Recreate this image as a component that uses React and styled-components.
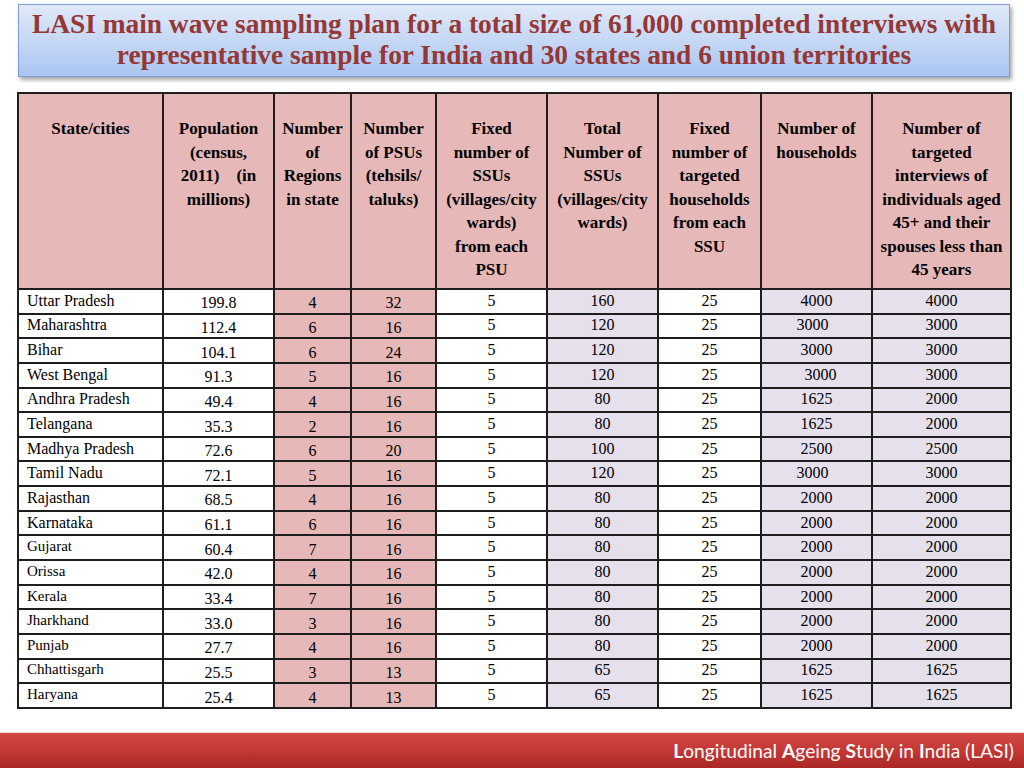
import React from "react";
import styled, { createGlobalStyle, css } from "styled-components";

const GlobalStyle = createGlobalStyle`
  html, body {
    margin: 0;
    padding: 0;
    background: #ffffff;
  }
`;

const COLS = [145, 111, 77, 85, 111, 111, 103, 111, 139];

// background for each body column
const FILL = {
  white: "#ffffff",
  pink: "#e6b9b8",
  lilac: "#e5e0ec",
};
const BODY_FILL = ["white", "white", "pink", "pink", "white", "lilac", "white", "lilac", "lilac"];

const HEADERS = [
  ["State/cities"],
  ["Population", "(census,", "2011)\u00a0\u00a0\u00a0\u00a0(in", "millions)"],
  ["Number", "of", "Regions", "in state"],
  ["Number", "of PSUs", "(tehsils/", "taluks)"],
  ["Fixed", "number of", "SSUs", "(villages/city", "wards)", "from each", "PSU"],
  ["Total", "Number of", "SSUs", "(villages/city", "wards)"],
  ["Fixed", "number of", "targeted", "households", "from each", "SSU"],
  ["Number of", "households"],
  ["Number of", "targeted", "interviews of", "individuals aged", "45+ and their", "spouses less than", "45 years"],
];

const ROWS = [
  ["Uttar Pradesh", "199.8", "4", "32", "5", "160", "25", "4000", "4000"],
  ["Maharashtra", "112.4", "6", "16", "5", "120", "25", "3000\u00a0\u00a0", "3000"],
  ["Bihar", "104.1", "6", "24", "5", "120", "25", "3000", "3000"],
  ["West Bengal", "91.3", "5", "16", "5", "120", "25", "\u00a0\u00a03000", "3000"],
  ["Andhra Pradesh", "49.4", "4", "16", "5", "80", "25", "1625", "2000"],
  ["Telangana", "35.3", "2", "16", "5", "80", "25", "1625", "2000"],
  ["Madhya Pradesh", "72.6", "6", "20", "5", "100", "25", "2500", "2500"],
  ["Tamil Nadu", "72.1", "5", "16", "5", "120", "25", "3000\u00a0\u00a0", "3000"],
  ["Rajasthan", "68.5", "4", "16", "5", "80", "25", "2000", "2000"],
  ["Karnataka", "61.1", "6", "16", "5", "80", "25", "2000", "2000"],
  ["Gujarat", "60.4", "7", "16", "5", "80", "25", "2000", "2000", true],
  ["Orissa", "42.0", "4", "16", "5", "80", "25", "2000", "2000", true],
  ["Kerala", "33.4", "7", "16", "5", "80", "25", "2000", "2000", true],
  ["Jharkhand", "33.0", "3", "16", "5", "80", "25", "2000", "2000", true],
  ["Punjab", "27.7", "4", "16", "5", "80", "25", "2000", "2000", true],
  ["Chhattisgarh", "25.5", "3", "13", "5", "65", "25", "1625", "1625", true],
  ["Haryana", "25.4", "4", "13", "5", "65", "25", "1625", "1625", true],
];

export default function App() {
  return (
    <Page>
      <GlobalStyle />
      <TitleBox>
        <Title>
          LASI main wave sampling plan for a total size of 61,000 completed interviews with
          <br />
          representative sample for India and 30 states and 6 union territories
        </Title>
      </TitleBox>

      <Table>
        <colgroup>
          {COLS.map((w, i) => (
            <col key={i} style={{ width: w }} />
          ))}
        </colgroup>
        <thead>
          <HeadRow>
            {HEADERS.map((lines, i) => (
              <HeadCell key={i}>
                {lines.map((l, j) => (
                  <React.Fragment key={j}>
                    {j > 0 && <br />}
                    {l}
                  </React.Fragment>
                ))}
              </HeadCell>
            ))}
          </HeadRow>
        </thead>
        <tbody>
          {ROWS.map((row) => (
            <BodyRow key={row[0]}>
              {row.slice(0, 9).map((v, i) => (
                <BodyCell
                  key={i}
                  $fill={FILL[BODY_FILL[i]]}
                  $name={i === 0}
                  $small={i === 0 && row[9]}
                  $low={i >= 1 && i <= 3}
                >
                  {v}
                </BodyCell>
              ))}
            </BodyRow>
          ))}
        </tbody>
      </Table>

      <Footer>
        <FooterText>
          <b>L</b>ongitudinal <b>A</b>geing <b>S</b>tudy in <b>I</b>ndia (LASI)
        </FooterText>
      </Footer>
    </Page>
  );
}

const Page = styled.div`
  width: 1024px;
  height: 768px;
  display: flex;
  flex-direction: column;
  overflow: hidden;
`;

const TitleBox = styled.div`
  margin: 4px 14px 0 18px;
  height: 73px;
  box-sizing: border-box;
  border: 1px solid #7f9dd0;
  background: linear-gradient(to bottom, #dfe9f9 0%, #c6d8f5 50%, #a9c5f0 100%);
  box-shadow: 2px 3px 4px rgba(0, 0, 0, 0.35);
  display: flex;
  align-items: center;
  justify-content: center;
`;

const Title = styled.h1`
  margin: 0 0 2px;
  font-family: "Liberation Serif", "DejaVu Serif", serif;
  font-weight: bold;
  font-size: 27.4px;
  line-height: 31px;
  color: #953735;
  text-align: center;
  white-space: nowrap;
`;

const Table = styled.table`
  margin: 15px 0 0 17px;
  width: 993px;
  table-layout: fixed;
  border-collapse: collapse;
  font-family: "Liberation Serif", "Times New Roman", serif;
  color: #000;
`;

const cellBorder = css`
  border: 2px solid #1e1e1e;
`;

const HeadRow = styled.tr`
  height: 196px;
`;

const HeadCell = styled.th`
  ${cellBorder};
  background: #e6b9b8;
  vertical-align: top;
  padding: 23px 2px 0;
  font-size: 17px;
  line-height: 23.5px;
  font-weight: bold;
  text-align: center;
  white-space: nowrap;
`;

const BodyRow = styled.tr`
  height: 24.65px;
`;

const BodyCell = styled.td`
  ${cellBorder};
  background: ${(p) => p.$fill};
  padding: ${(p) => (p.$low ? "3px 2px 0" : "0 2px 2px")};
  font-size: ${(p) => (p.$small ? "15px" : "16px")};
  line-height: 17px;
  text-align: ${(p) => (p.$name ? "left" : "center")};
  padding-left: ${(p) => (p.$name ? "8px" : "2px")};
  white-space: nowrap;
`;

const Footer = styled.div`
  margin-top: auto;
  height: 35px;
  border-top: 1px solid #f0d8d8;
  background: linear-gradient(to bottom, #d24844 0%, #c23633 55%, #a92826 100%);
  display: flex;
  align-items: center;
  justify-content: flex-end;
  padding-right: 10px;
`;

const FooterText = styled.div`
  font-family: Lato, "Open Sans", sans-serif;
  font-size: 19.2px;
  color: #ffffff;

  b {
    font-weight: bold;
  }
`;
